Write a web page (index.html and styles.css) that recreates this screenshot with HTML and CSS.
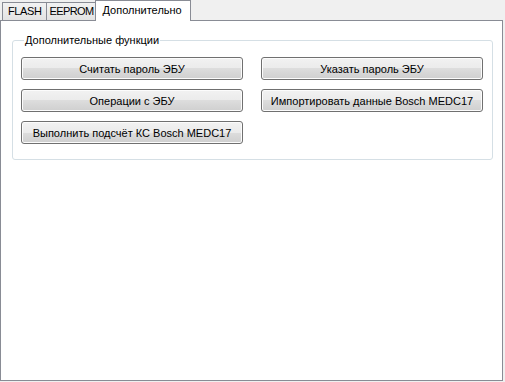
FILE: index.html
```html
<!DOCTYPE html>
<html lang="ru">
<head>
<meta charset="utf-8">
<title>Дополнительно</title>
<link rel="stylesheet" href="styles.css">
</head>
<body>
<div class="window">
  <div class="tabs">
    <div class="tab tab-flash">FLASH</div>
    <div class="tab tab-eeprom">EEPROM</div>
    <div class="tab active">Дополнительно</div>
  </div>
  <div class="pane">
    <fieldset class="group">
      <legend class="legend">Дополнительные функции</legend>
      <div class="grid">
        <button class="btn">Считать пароль ЭБУ</button>
        <button class="btn">Указать пароль ЭБУ</button>
        <button class="btn">Операции с ЭБУ</button>
        <button class="btn">Импортировать данные Bosch MEDC17</button>
        <button class="btn">Выполнить подсчёт КС Bosch MEDC17</button>
      </div>
    </fieldset>
  </div>
</div>
</body>
</html>
```
FILE: styles.css
```css
html, body {
  margin: 0;
  padding: 0;
  background: #f0f0f0;
  font-family: "Liberation Sans", Arial, sans-serif;
  font-size: 11px;
  color: #000;
}
.window {
  width: 503px;
  height: 381px;
  display: flex;
  flex-direction: column;
}
.tabs {
  display: flex;
  align-items: flex-end;
  height: 20px;
  padding-left: 2px;
}
.tab {
  box-sizing: border-box;
  height: 18px;
  padding: 0 3px;
  letter-spacing: -0.4px;
  line-height: 16px;
  border: 1px solid #898c95;
  border-bottom: none;
  background: linear-gradient(#f2f2f2, #e3e3e3);
}
.tab + .tab {
  margin-left: -1px;
}
.tab-flash {
  padding: 0 5px;
}
.tab-eeprom {
  padding: 0 1px 0 2px;
  letter-spacing: -0.6px;
}
.tab.active {
  height: 21px;
  margin-bottom: -1px;
  padding: 0 8px 0 7px;
  letter-spacing: 0;
  line-height: 18px;
  background: #fff;
  position: relative;
  z-index: 1;
}
.pane {
  flex: 1;
  box-sizing: border-box;
  border: 1px solid #898c95;
  background: #fff;
  padding: 13px 9px 0 11px;
}
.group {
  margin: 0;
  border: 1px solid #d5dfe5;
  border-radius: 3px;
  padding: 10px 8px 15px 8px;
  min-width: 0;
}
.legend {
  padding: 0 1px;
  margin-left: 3px;
  line-height: 13px;
}
.grid {
  display: grid;
  grid-template-columns: 222px 222px;
  column-gap: 18px;
  row-gap: 9px;
}
.btn {
  box-sizing: border-box;
  height: 23px;
  margin: 0;
  padding: 0;
  font-family: "Liberation Sans", Arial, sans-serif;
  font-size: 11px;
  color: #000;
  border: 1px solid #707070;
  border-radius: 3px;
  background: linear-gradient(#f2f2f2 0%, #ebebeb 50%, #dddddd 50%, #cfcfcf 100%);
  box-shadow: inset 0 0 0 1px #fcfcfc;
}
```
